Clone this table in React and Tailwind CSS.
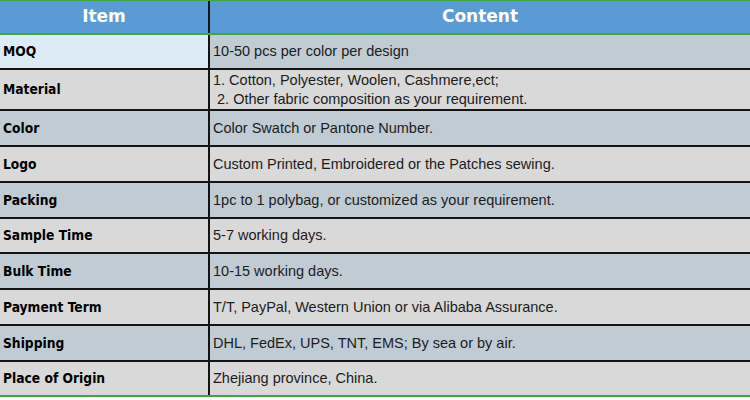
import React from "react";

const rows = [
  { label: "MOQ", content: ["10-50 pcs per color per design"], h: "h-[35px]", tone: "moq" },
  {
    label: "Material",
    content: ["1. Cotton, Polyester, Woolen, Cashmere,ect;", "\u00a02. Other fabric composition as your requirement."],
    h: "h-[41px]",
    tone: "gray",
  },
  { label: "Color", content: ["Color Swatch or Pantone Number."], h: "h-[36px]", tone: "blue" },
  { label: "Logo", content: ["Custom Printed, Embroidered or the Patches sewing."], h: "h-[36px]", tone: "gray" },
  { label: "Packing", content: ["1pc to 1 polybag, or customized as your requirement."], h: "h-[36px]", tone: "blue" },
  { label: "Sample Time", content: ["5-7 working days."], h: "h-[35px]", tone: "gray" },
  { label: "Bulk Time", content: ["10-15 working days."], h: "h-[36px]", tone: "blue" },
  { label: "Payment Term", content: ["T/T, PayPal, Western Union or via Alibaba Assurance."], h: "h-[36px]", tone: "gray" },
  { label: "Shipping", content: ["DHL, FedEx, UPS, TNT, EMS; By sea or by air."], h: "h-[36px]", tone: "blue" },
];

function Row({ row, last }) {
  const left = row.tone === "moq" ? "bg-[#ddebf7]" : row.tone === "gray" ? "bg-[#d9d9d9]" : "bg-[#c0cbd4]";
  const right = row.tone === "gray" ? "bg-[#d9d9d9]" : "bg-[#c0cbd4]";
  return (
    <div className={`flex ${row.h} ${last ? "border-b-2 border-[#3ea83e]" : "border-b-2 border-[#141414]"}`}>
      <div className={`w-[210px] shrink-0 flex items-center pl-[3px] ${left} border-r-2 border-[#141414] font-['DejaVu_Sans_Condensed','DejaVu_Sans',sans-serif] font-bold text-[13.7px] text-black`}>
        {row.label}
      </div>
      <div className={`flex-1 flex flex-col justify-center pl-[3px] ${right} font-['Liberation_Sans',Arial,sans-serif] text-[14.5px] leading-[19px] text-[#1c1c1c]`}>
        {row.content.map((line, i) => (
          <div key={i} className="whitespace-pre">{line}</div>
        ))}
      </div>
    </div>
  );
}

export default function App() {
  return (
    <div className="w-[750px] h-[400px] bg-white overflow-hidden">
      <div className="border-t border-[#3ea83e]">
        <div className="flex h-[34px] bg-[#5b9bd5] border-b-2 border-[#3ea83e] font-['DejaVu_Sans',sans-serif] font-bold text-[17px] text-white">
          <div className="w-[210px] shrink-0 flex items-center justify-center border-r-2 border-[#141414]">Item</div>
          <div className="flex-1 flex items-center justify-center">Content</div>
        </div>
        {rows.map((row) => (
          <Row key={row.label} row={row} />
        ))}
        <Row row={{ label: "Place of Origin", content: ["Zhejiang province, China."], h: "h-[35px]", tone: "gray" }} last />
      </div>
    </div>
  );
}
